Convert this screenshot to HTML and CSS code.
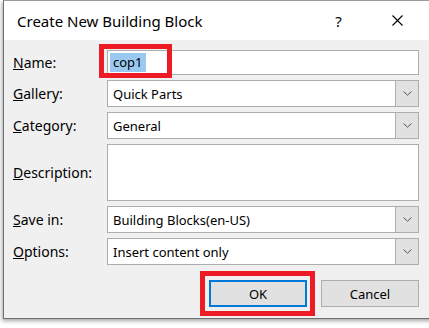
FILE: index.html
```html
<!DOCTYPE html>
<html>
<head>
<meta charset="utf-8">
<link rel="stylesheet" href="styles.css">
</head>
<body>
<div class="window">
  <div class="titlebar">
    <span class="title">Create New Building Block</span>
    <span class="help">?</span>
    <span class="close"><svg width="11" height="11" viewBox="0 0 11 11"><path d="M0.5 0.5 L10.5 10.5 M10.5 0.5 L0.5 10.5" stroke="#000" stroke-width="1.1" fill="none"/></svg></span>
  </div>
  <div class="body">
    <div class="form">
      <label class="lbl"><u>N</u>ame:</label>
      <div class="field input name-field"><span class="sel">cop1</span><span class="mark mark-name"></span></div>

      <label class="lbl"><u>G</u>allery:</label>
      <div class="field select"><span class="val">Quick Parts</span><span class="drop"><svg width="9" height="5" viewBox="0 0 9 5"><path d="M0.5 0.5 L4.5 4.2 L8.5 0.5" stroke="#555" stroke-width="1" fill="none"/></svg></span></div>

      <label class="lbl"><u>C</u>ategory:</label>
      <div class="field select"><span class="val">General</span><span class="drop"><svg width="9" height="5" viewBox="0 0 9 5"><path d="M0.5 0.5 L4.5 4.2 L8.5 0.5" stroke="#555" stroke-width="1" fill="none"/></svg></span></div>

      <label class="lbl lbl-desc"><u>D</u>escription:</label>
      <div class="field textarea"></div>

      <label class="lbl"><u>S</u>ave in:</label>
      <div class="field select"><span class="val">Building Blocks(en-US)</span><span class="drop"><svg width="9" height="5" viewBox="0 0 9 5"><path d="M0.5 0.5 L4.5 4.2 L8.5 0.5" stroke="#555" stroke-width="1" fill="none"/></svg></span></div>

      <label class="lbl"><u>O</u>ptions:</label>
      <div class="field select"><span class="val">Insert content only</span><span class="drop"><svg width="9" height="5" viewBox="0 0 9 5"><path d="M0.5 0.5 L4.5 4.2 L8.5 0.5" stroke="#555" stroke-width="1" fill="none"/></svg></span></div>
    </div>
    <div class="buttons">
      <div class="btn ok">OK<span class="mark mark-ok"></span></div>
      <div class="btn">Cancel</div>
    </div>
  </div>
</div>
</body>
</html>
```

FILE: styles.css
```css
html, body {
  margin: 0;
  padding: 0;
  background: #ffffff;
  overflow: hidden;
  width: 429px;
  height: 328px;
}
body {
  font-family: "Noto Sans", "Open Sans", sans-serif;
  color: #000;
}
.window {
  margin-left: 3px;
  width: 440px;
  height: 319px;
  border-left: 1px solid #6e6e6e;
  border-bottom: 1px solid #6e6e6e;
  border-top: 1px solid #9a9a9a;
  box-sizing: border-box;
  background: #f0f0f0;
  box-shadow: -1px 2px 4px rgba(0,0,0,0.35);
  display: flex;
  flex-direction: column;
}
.titlebar {
  height: 39px;
  background: #ffffff;
  display: flex;
  align-items: center;
  padding-left: 13px;
  flex-shrink: 0;
}
.title {
  font-size: 15px;
  flex: 1;
}
.help {
  font-size: 15px;
  width: 57px;
  text-align: center;
}
.close {
  width: 60px;
  display: flex;
  justify-content: center;
  margin-right: 16px;
}
.body {
  padding: 10px 0 0 9px;
  display: flex;
  flex-direction: column;
}
.form {
  display: grid;
  grid-template-columns: 94px 312px;
  row-gap: 5px;
  align-items: center;
}
.lbl {
  font-size: 14px;
}
.lbl-desc {
  align-self: center;
}
.field {
  box-sizing: border-box;
  background: #fff;
  border: 1px solid #adadad;
  font-size: 13px;
  display: flex;
  align-items: center;
  position: relative;
}
.input {
  height: 25px;
  padding-left: 2px;
}
.sel {
  background: #99c9ef;
  padding: 0 3px;
  line-height: 19px;
}
.select {
  height: 27px;
  padding-left: 5px;
}
.val {
  flex: 1;
}
.drop {
  width: 22px;
  align-self: stretch;
  margin: -1px -1px -1px 0;
  border: 1px solid #adadad;
  background: #e1e1e1;
  display: flex;
  align-items: center;
  justify-content: center;
}
.textarea {
  height: 57px;
}
.buttons {
  display: flex;
  gap: 14px;
  margin-top: 15px;
  padding-left: 196px;
}
.btn {
  box-sizing: border-box;
  width: 98px;
  height: 27px;
  background: #e1e1e1;
  border: 1px solid #adadad;
  font-size: 13px;
  display: flex;
  align-items: center;
  justify-content: center;
  position: relative;
}
.ok {
  border: 2px solid #0078d7;
}
.mark {
  position: absolute;
  border: 5px solid #ed1c24;
  box-sizing: border-box;
}
.mark-name {
  left: -9px;
  top: -7px;
  width: 73px;
  height: 34px;
}
.mark-ok {
  left: -11px;
  top: -11px;
  width: 115px;
  height: 45px;
}
```
